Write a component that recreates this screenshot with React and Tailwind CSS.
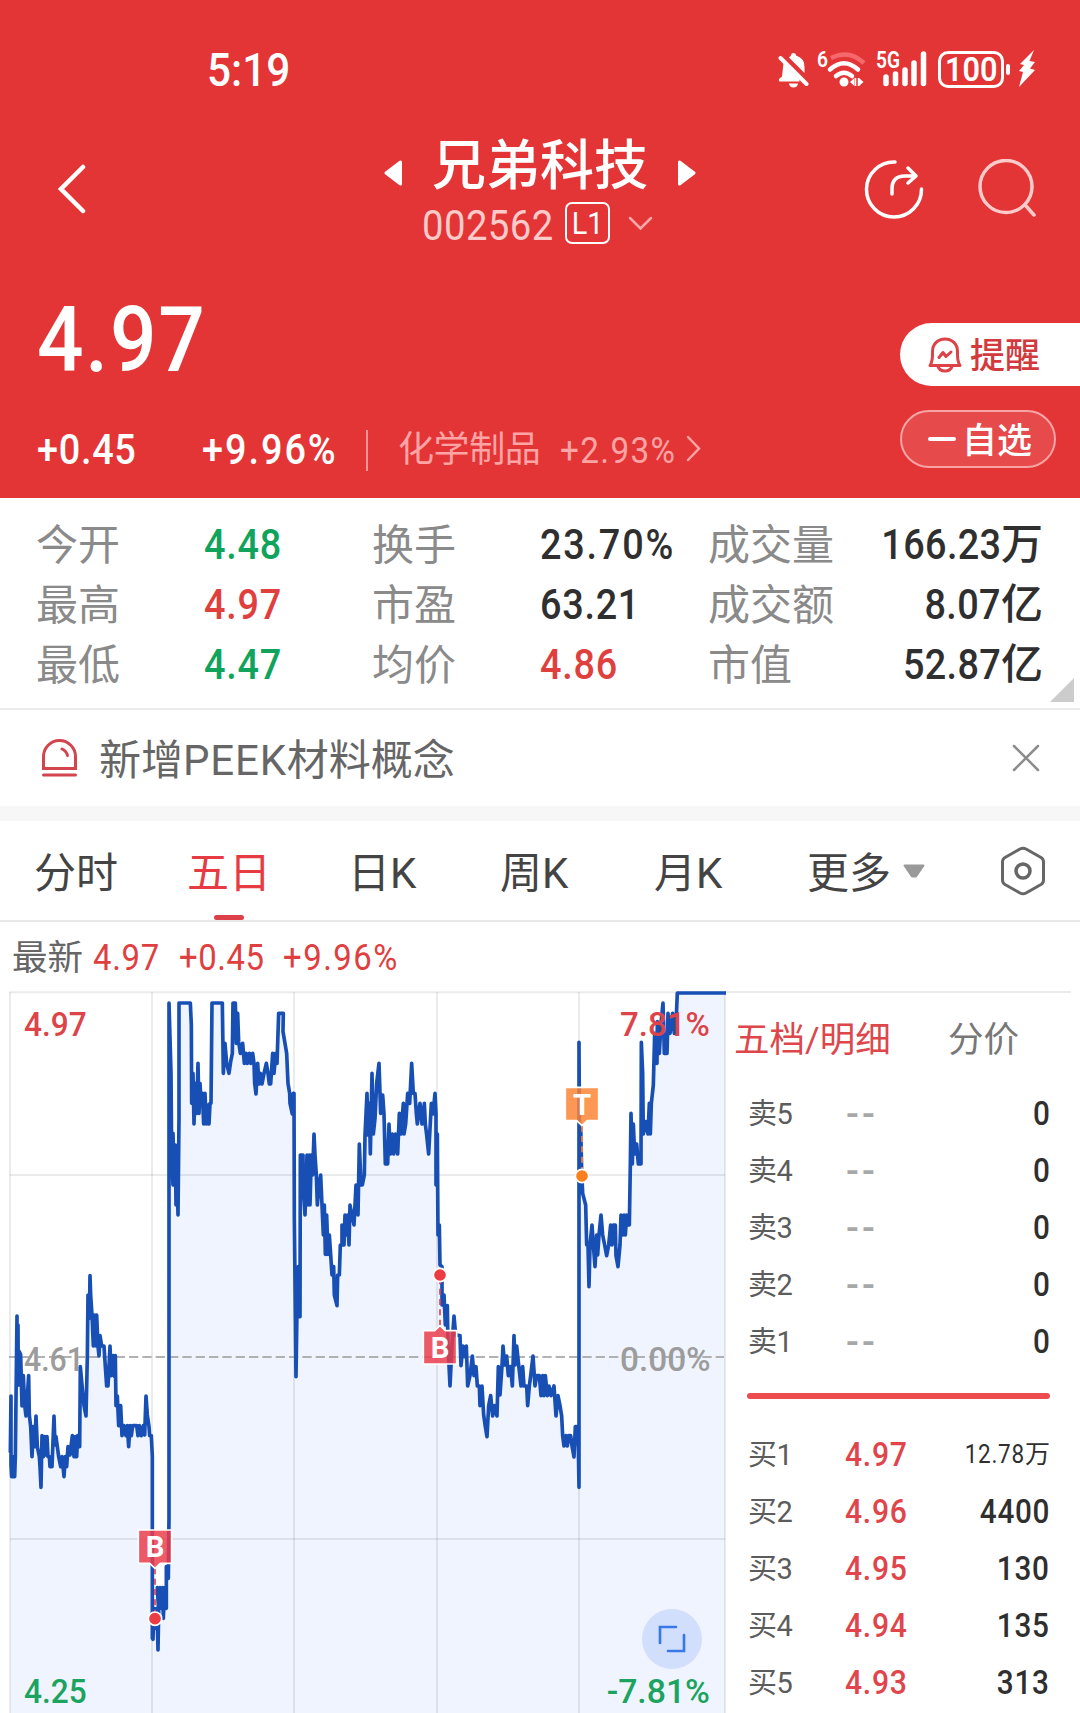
import React, { useState } from 'react';
import clsx from 'clsx';

const stats = [
  [
    { label: '今开', value: '4.48', color: 'text-[#0fa35c]' },
    { label: '换手', value: '23.70%', color: 'text-[#2f2f2f]' },
    { label: '成交量', value: '166.23', unit: '万', color: 'text-[#2f2f2f]' },
  ],
  [
    { label: '最高', value: '4.97', color: 'text-[#e0403d]' },
    { label: '市盈', value: '63.21', color: 'text-[#2f2f2f]' },
    { label: '成交额', value: '8.07', unit: '亿', color: 'text-[#2f2f2f]' },
  ],
  [
    { label: '最低', value: '4.47', color: 'text-[#0fa35c]' },
    { label: '均价', value: '4.86', color: 'text-[#e0403d]' },
    { label: '市值', value: '52.87', unit: '亿', color: 'text-[#2f2f2f]' },
  ],
];

const tabs = [
  { name: '分时', width: 'w-[153px]' },
  { name: '五日', width: 'w-[161px]' },
  { name: '日K', width: 'w-[152px]' },
  { name: '周K', width: 'w-[154px]' },
  { name: '月K', width: 'w-[153px]' },
];

const sells = ['卖5', '卖4', '卖3', '卖2', '卖1'];

const buys = [
  { label: '买1', price: '4.97', volume: '12.78', unit: '万' },
  { label: '买2', price: '4.96', volume: '4400' },
  { label: '买3', price: '4.95', volume: '130' },
  { label: '买4', price: '4.94', volume: '135' },
  { label: '买5', price: '4.93', volume: '313' },
];

// Five days of prices, one string per trading day (x,y in chart units)
const days = [
  '31,1400 33,1233 33,1440 35,1475 38,1415 40,1475 44,1475 46,1415 48,1240 51,993 51,1200 54,1020 55,1200 58,1100 62,1110 66,1263 70,1172 74,1260 78,1293 86,1172 88,1290 92,1325 96,1415 100,1325 104,1385 108,1293 112,1385 118,1415 120,1445 123,1507 126,1352 130,1415 134,1355 138,1410 141,1355 144,1415 148,1415 150,1445 156,1445 162,1293 165,1380 168,1355 172,1385 176,1415 182,1445 186,1415 192,1475 196,1415 200,1445 204,1385 210,1410 217,1352 222,1415 226,1355 230,1415 233,1352 236,1385 239,1385 241,1145 246,1200 252,1262 258,1293 262,1115 264,930 268,1000 270,872 272,930 276,990 280,1083 284,990 288,1083 290,990 294,1083 297,1113 300,1052 305,1083 312,1083 316,1145 320,1203 324,1203 330,1083 334,1172 340,1112 344,1175 346,1112 348,1262 352,1233 356,1322 362,1262 366,1352 372,1322 378,1352 382,1322 386,1385 390,1322 394,1352 398,1322 410,1322 414,1352 418,1322 424,1352 430,1322 434,1350 438,1233 442,1290 447,1325 449,1352 454,1352 457,1415 457,1960',
  '459,1963 462,1870 468,1930 471,1870 474,1995 476,1880 472,1808 476,1870 480,1808 484,1870 488,1808 490,1900 494,1808 496,1870 499,1870 499,1745 505,1780 507,1600 507,54 513,265 515,510 519,600 519,445 523,600 526,480 528,660 530,510 534,690 537,400 537,54 571,54 574,120 575,355 579,265 582,417 586,295 590,385 594,235 597,385 600,295 603,350 607,325 611,417 615,325 619,417 622,360 627,417 630,355 633,355 636,54 667,54 670,265 675,175 680,235 687,265 692,230 697,205 699,54 706,54 709,175 713,85 716,170 721,205 728,175 733,235 738,205 742,235 748,205 752,235 758,205 762,235 764,295 768,327 773,235 777,297 781,265 786,297 792,265 799,235 804,265 808,297 812,297 818,205 822,265 827,205 831,235 836,85 850,85 849,140 855,175 860,205 864,295 869,325 870,355 877,387 880,325 882,325 883,700',
  '888,1175 892,905 895,845 900,995 901,510 909,510 909,600 915,690 921,510 924,660 928,510 930,660 934,510 938,570 942,447 945,510 949,570 952,660 957,600 962,570 966,660 970,750 973,660 976,808 980,690 984,808 988,750 992,808 996,870 1001,845 1003,930 1011,962 1013,870 1018,870 1021,780 1026,780 1026,720 1032,780 1035,690 1040,750 1043,690 1047,780 1050,660 1056,690 1062,720 1068,600 1074,690 1078,477 1083,600 1087,600 1093,570 1095,450 1101,325 1104,450 1108,355 1111,507 1116,265 1120,447 1125,400 1130,295 1137,235 1142,385 1148,330 1152,387 1156,537 1163,537 1167,417 1171,507 1177,447 1181,507 1186,447 1193,507 1198,385 1203,447 1210,355 1212,447 1217,417 1223,325 1229,355 1235,235 1240,325 1245,325 1249,385 1252,417 1260,355 1266,417 1273,355 1276,417 1280,450 1286,507 1294,355 1299,387 1305,325 1308,385',
  '1308,600 1312,447 1314,750 1318,720 1320,840 1326,845 1326,960 1332,930 1336,1020 1342,962 1344,1080 1350,1203 1356,1080 1362,993 1367,1050 1380,1052 1383,1142 1389,1083 1395,1115 1399,1083 1403,1203 1410,1172 1417,1113 1422,1172 1428,1145 1432,1203 1438,1203 1440,1262 1446,1203 1451,1290 1456,1325 1461,1355 1466,1262 1472,1232 1478,1293 1484,1262 1491,1293 1495,1145 1500,1230 1506,1142 1509,1083 1514,1140 1520,1113 1525,1172 1532,1145 1537,1203 1542,1052 1545,1140 1550,1083 1556,1140 1563,1203 1568,1145 1572,1203 1580,1203 1583,1262 1588,1203 1592,1172 1599,1113 1605,1203 1610,1172 1618,1172 1623,1232 1628,1172 1632,1232 1636,1172 1642,1232 1647,1203 1653,1232 1662,1203 1668,1293 1674,1232 1680,1262 1685,1293 1688,1352 1692,1383 1698,1352 1702,1383 1706,1352 1712,1352 1716,1383 1722,1416 1726,1325 1730,1325 1735,1383 1737,1507',
  '1737,172 1739,560 1742,420 1745,560 1748,625 1757,660 1760,780 1764,780 1767,905 1770,780 1776,720 1780,780 1785,845 1790,750 1793,810 1797,750 1803,690 1808,750 1814,780 1820,812 1826,780 1832,720 1836,780 1840,720 1846,720 1848,812 1854,845 1860,780 1863,690 1868,750 1872,690 1876,750 1880,690 1883,720 1888,720 1891,540 1893,385 1897,537 1900,417 1904,507 1910,477 1915,537 1923,537 1924,172 1928,265 1930,447 1938,410 1944,447 1948,355 1951,447 1954,355 1960,300 1964,145 1971,235 1972,110 1978,205 1983,115 1989,54 1993,205 2001,205 2004,85 2010,145 2018,85 2023,145 2028,115 2032,24 2175,24',
];
const line = days.join(' ');

// Narrow digits, in the manner of DIN
const Num = ({ children, className, right }) => (
  <span className={clsx('inline-block scale-x-90', right ? 'origin-right' : 'origin-left', className)}>{children}</span>
);

const Marker = ({ x, top, dotY, letter, color, dot, up }) => {
  const bottom = top + 100;
  const shape = up
    ? `M${x - 50} ${top}h34l16 -15l16 15h34v100h-100z`
    : `M${x - 50} ${top}h100v100h-34l-16 15l-16 -15h-34z`;
  return (
    <g>
      <line x1={x} x2={x} y1={up ? top - 15 : bottom + 15} y2={dotY} stroke={color} strokeWidth="5" strokeDasharray="18 13" />
      <path d={shape} fill={color} fillOpacity="0.84" stroke="#fff" strokeWidth="5" strokeLinejoin="round" />
      <text x={x} y={top + 82} fill="#fff" fontSize="88" fontWeight="700" textAnchor="middle">{letter}</text>
      <circle cx={x} cy={dotY} r="20" fill={dot} stroke="#fff" strokeWidth="5" />
    </g>
  );
};

const Chart = () => (
  <svg className="block h-[728px] w-[726px] shrink-0 font-['Roboto',sans-serif]" viewBox="0 0 2178 2184">
    <polygon points={`31,2184 ${line} 2175,2184`} fill="#eff4fe" />
    {/* Grid */}
    <g stroke="#000" strokeOpacity="0.08" strokeWidth="6">
      <path d="M27 22H2178M30 570H2175M30 1662H2175" />
      <path d="M30 22V2184M456 22V2184M882 22V2184M1311 22V2184M1737 22V2184M2175 22V2184" />
    </g>
    <path d="M27 1116H2172" stroke="#999" strokeWidth="5" strokeDasharray="28 12" />
    <g fontSize="97" fontWeight="500" fill="#9c9c9c">
      <text x="72" y="1159" textLength="180" lengthAdjust="spacingAndGlyphs">4.61</text>
      <text x="1860" y="1159" textLength="272" lengthAdjust="spacingAndGlyphs">0.00%</text>
    </g>
    <polyline points={line} fill="none" stroke="#184fb5" strokeWidth="11" strokeLinejoin="round" strokeLinecap="round" />
    <g fontSize="97" fontWeight="500">
      <text x="72" y="153" fill="#dd4449" textLength="188" lengthAdjust="spacingAndGlyphs">4.97</text>
      <text x="1860" y="153" fill="#dd4449" textLength="270" lengthAdjust="spacingAndGlyphs">7.81%</text>
      <text x="72" y="2153" fill="#1ba35f" textLength="188" lengthAdjust="spacingAndGlyphs">4.25</text>
      <text x="1820" y="2153" fill="#1ba35f" textLength="310" lengthAdjust="spacingAndGlyphs">-7.81%</text>
    </g>
    <Marker x={465} top={1635} dotY={1901} letter="B" color="#ec3b4a" dot="#ec3b43" />
    <Marker x={1320} top={1037} dotY={870} letter="B" color="#ec3b4a" dot="#ec3b43" up />
    <Marker x={1746} top={307} dotY={573} letter="T" color="#fb8433" dot="#fb7f1f" />
    {/* Expand button */}
    <circle cx="2016" cy="1962" r="90" fill="#d1dffc" />
    <path d="M1980 1974V1926H2028M2052 1950V1998H2004" fill="none" stroke="#3b78e7" strokeWidth="8" strokeLinecap="round" />
  </svg>
);

const StatusBar = () => (
  <div className="flex h-[134px] items-center pt-1 pr-[45px] pl-[207px] text-white">
    <Num className="text-[47px] font-medium">5:19</Num>
    <svg className="ml-auto h-[38px] w-[31px]" viewBox="0 0 31 38" fill="#fff">
      <path d="M13 5.500Q13 3 15.500 3Q18 3 18 5.500Q26.500 8 26.500 17V23L11 7.500Z" />
      <path d="M5.500 13L21.500 29.500V31.500H1.500Q0 30 1.500 28.500L4 26.500Z" />
      <path d="M11 33.500h9a4.500 4 0 0 1 -9 0z" />
      <path d="M2.500 8L28.500 34" stroke="#fff" strokeWidth="4" strokeLinecap="round" />
    </svg>
    <svg className="ml-[8px] h-[58px] w-[50px] font-['Roboto',sans-serif]" viewBox="0 -10 50 58">
      <text x="0" y="17" fill="#fff" fontSize="22" fontWeight="600" textLength="11" lengthAdjust="spacingAndGlyphs">6</text>
      <g fill="none" stroke="#fff" strokeWidth="4.500" strokeLinecap="round">
        <path d="M14 8Q32 -1 47 13" stroke="#f5696c" strokeLinecap="butt" />
        <path d="M13 19.500Q27 7 41 19.500" />
        <path d="M19 26Q27 19.500 35 26" />
      </g>
      <circle cx="27" cy="32" r="4.500" fill="#fff" />
      <path d="M33 32L37.500 28V36ZM46.500 32L42 28V36Z" fill="#fff" />
      <path d="M38.500 28V36M41.500 28V36" stroke="#fff" strokeWidth="1.500" />
    </svg>
    <svg className="ml-[9px] h-[58px] w-[52px] font-['Roboto',sans-serif]" viewBox="0 -10 52 58">
      <text x="0" y="18" fill="#fff" fontSize="23" fontWeight="600" textLength="24" lengthAdjust="spacingAndGlyphs">5G</text>
      <path d="M10 27V33.500M19.500 24V33.500M29 20V33.500M38 13V33.500M47.500 4V33.500" stroke="#fff" strokeWidth="5.500" strokeLinecap="round" />
    </svg>
    <div className="ml-[10px] flex h-[37px] w-[66px] items-center justify-center rounded-[10px] border-[3px] border-white text-[34px] font-semibold">
      <span className="scale-x-90">100</span>
    </div>
    <div className="ml-[2px] h-[11px] w-[4px] rounded-sm bg-white" />
    <svg className="ml-[8px] h-[38px] w-[17px]" viewBox="0 0 17 38" fill="#fff">
      <path d="M16 0L2 14L6 15L1 21L5 22L1 37L17 20L12 18.500L17 12L11.500 11Z" />
    </svg>
  </div>
);

const NavBar = () => (
  <div className="flex h-[110px] items-center justify-between pr-[44px] pl-[58px] text-white">
    <svg className="mr-[90px] h-[50px] w-[28px]" viewBox="0 0 28 50" fill="none" stroke="#fff" strokeWidth="4.500" strokeLinecap="round">
      <path d="M25 3L3 25L25 47" />
    </svg>
    <div className="flex h-full flex-col items-center pt-[4px] pl-[40px]">
      <div className="flex h-[54px] items-center">
        <svg className="mt-4 h-[28px] w-[18px]" viewBox="0 0 18 28" fill="#fff" stroke="#fff" strokeWidth="3" strokeLinejoin="round">
          <path d="M16.500 3V25L2 14Z" />
        </svg>
        <h1 className="mx-[30px] pt-1 text-[54px] font-medium">兄弟科技</h1>
        <svg className="mt-4 h-[28px] w-[18px]" viewBox="0 0 18 28" fill="#fff" stroke="#fff" strokeWidth="3" strokeLinejoin="round">
          <path d="M1.500 3V25L16 14Z" />
        </svg>
      </div>
      <div className="mt-[10px] flex h-[42px] items-center pr-[5px]">
        <Num className="mt-[6px] w-[131px] text-[42.500px] tracking-[0.5px] text-[#ffcaca]">002562</Num>
        <span className="ml-[12px] flex h-[42px] w-[45px] items-center justify-center rounded-[7px] border-2 border-white text-[32px]">
          <span className="scale-x-90">L1</span>
        </span>
        <svg className="ml-[18px] h-[15px] w-[25px]" viewBox="0 0 25 15" fill="none" stroke="#ffa9aa" strokeWidth="2.500" strokeLinecap="round">
          <path d="M2 2L12.500 12.500L23 2" />
        </svg>
      </div>
    </div>
    <div className="flex items-center gap-[52px]">
      <svg className="h-[60px] w-[60px]" viewBox="0 0 60 60" fill="none" stroke="#fff" strokeWidth="3.500" strokeLinecap="round" strokeLinejoin="round">
        <path d="M31 3A27.500 27.500 0 1 0 57.500 30" />
        <path d="M28 35V30Q28 17 41 17H52M44 9L52 17L44 24" />
      </svg>
      <svg className="h-[60px] w-[60px]" viewBox="0 0 60 60" fill="none" stroke="#ffcaca" strokeWidth="3.500" strokeLinecap="round">
        <circle cx="30" cy="27.500" r="26" />
        <path d="M50 47L58 56" />
      </svg>
    </div>
  </div>
);

const PricePanel = () => (
  <div className="flex h-[254px] justify-between pl-[37px]">
    <div className="pt-[51px] text-white">
      <Num className="block text-[91px] font-medium tracking-[2px]">4.97</Num>
      <div className="mt-[43px] flex h-[42px] items-center text-[42px] font-medium">
        <Num className="w-[165px] tracking-[0.8px]">+0.45</Num>
        <Num className="w-[164px] tracking-[2.2px]">+9.96%</Num>
        <span className="h-[41px] w-[2px] bg-[#f39596]" />
        <span className="ml-[30px] text-[36px] font-normal tracking-[-0.4px] text-[#ffa4a5]">化学制品</span>
        <Num className="ml-[20px] w-[114px] text-[37px] font-normal tracking-[1.500px] text-[#ffa4a5]">+2.93%</Num>
        <svg className="-mt-1 ml-[12px] h-[27px] w-[15px]" viewBox="0 0 15 27" fill="none" stroke="#ffa4a5" strokeWidth="2.500" strokeLinecap="round">
          <path d="M2 2L13 13.500L2 25" />
        </svg>
      </div>
    </div>
    <div className="pt-[79px]">
      <button className="flex h-[63px] w-[180px] items-center rounded-l-full bg-white pl-[28px] text-[35px] font-medium text-[#d23a3d]">
        <svg className="mr-[8px] h-[36px] w-[34px]" viewBox="0 0 34 36" fill="none" stroke="#dc4248" strokeWidth="3" strokeLinecap="round" strokeLinejoin="round">
          <path d="M2 28.500C5 24 4.500 20 4.500 14.500C4.500 7 10 2 17 2C24 2 29.500 7 29.500 14.500C29.500 20 29 24 32 28.500Z" />
          <path d="M10 29.500Q11.500 34 17 34Q22.500 34 24 29.500" />
          <path d="M11 20.500L15 15.500L18 19.500L23 15" />
        </svg>
        <span className="pt-[3px]">提醒</span>
      </button>
      <button className="mt-[24px] flex h-[58px] w-[156px] items-center rounded-full border-2 border-[#f8a3a4] bg-[#e64a4b] pl-[26px] text-[35px] font-medium text-white">
        <span className="mr-[6px] h-[4px] w-[28px] rounded-full bg-white" />
        <span className="pt-1">自选</span>
      </button>
    </div>
  </div>
);

const Stats = () => (
  <div className="relative h-[212px] border-b-2 border-[#ebebeb] pt-[17px] pr-[37px] pl-[36px] text-[42px]">
    {stats.map((row, i) => (
      <div key={i} className="flex h-[60px] items-center">
        {row.map((cell, j) => (
          <React.Fragment key={cell.label}>
            <span className={clsx('pt-[2px] text-[#8a8a8a]', j === 2 ? 'w-[140px]' : 'w-[168px]')}>{cell.label}</span>
            {cell.unit ? (
              <span className={clsx('flex-1 text-right font-medium', cell.color)}>
                <Num right className="tracking-[0.4px]">{cell.value}</Num>
                {cell.unit}
              </span>
            ) : (
              <Num className={clsx('w-[168px] font-medium', cell.value.endsWith('%') ? 'tracking-[2px]' : 'tracking-[0.8px]', cell.color)}>
                {cell.value}
              </Num>
            )}
          </React.Fragment>
        ))}
      </div>
    ))}
    <svg className="absolute right-[6px] bottom-[6px] h-[24px] w-[24px]" viewBox="0 0 24 24" fill="#ccc">
      <path d="M24 0V24H0Z" />
    </svg>
  </div>
);

const Notice = ({ onClose }) => (
  <div className="flex h-[96px] items-center pr-[40px] pl-[41px]">
    <svg className="h-[38px] w-[37px]" viewBox="0 0 37 38" fill="none" stroke="#d2454e" strokeWidth="3" strokeLinecap="round">
      <path d="M2.500 29.500V17.500A16 16 0 0 1 34.500 17.500V29.500Z" />
      <path d="M2.500 36H34.500" />
      <path d="M21 10Q25.500 12 26.500 16.500" />
    </svg>
    <span className="ml-[21px] pt-[5px] text-[42px] text-[#666]">
      新增<span className="tracking-[0.8px]">PEEK</span>材料概念
    </span>
    <button onClick={onClose} className="ml-auto">
      <svg className="h-[28px] w-[28px]" viewBox="0 0 28 28" fill="none" stroke="#8c8c8c" strokeWidth="2.500" strokeLinecap="round">
        <path d="M2 2L26 26M26 2L2 26" />
      </svg>
    </button>
  </div>
);

const OrderBook = () => (
  <div className="mt-[6px] mr-[9px] flex-1 border-t-2 border-[#ebebeb] text-[29px] text-[#5c5c5c]">
    <div className="flex h-[92px] items-center pt-1 pl-[8px] text-[35.500px]">
      <span className="w-[214px] text-[#dd474b]">五档/明细</span>
      <span className="text-[#777]">分价</span>
    </div>
    {sells.map((label) => (
      <div key={label} className="flex h-[57px] items-center pr-[21px] pl-[22px]">
        <span className="w-[98px] pt-[2px] tracking-[-0.5px]">{label}</span>
        <span className="text-[38px] font-medium tracking-[3px] text-[#a8a8a8]">--</span>
        <Num right className="ml-auto text-[33px] font-medium text-[#2f2f2f]">0</Num>
      </div>
    ))}
    <div className="mt-[23px] mr-[21px] mb-[27px] ml-[21px] h-[6px] rounded-full bg-[#ee4b4e]" />
    {buys.map((row) => (
      <div key={row.label} className="flex h-[57px] items-center pr-[21px] pl-[22px]">
        <span className="w-[97px] pt-[2px] tracking-[-0.5px]">{row.label}</span>
        <Num className="text-[33.500px] font-medium tracking-[0.8px] text-[#df454a]">{row.price}</Num>
        <span className={clsx('ml-auto text-[#2f2f2f]', row.unit ? 'text-[25px]' : 'text-[33px] font-medium')}>
          <Num right className="tracking-[0.8px]">{row.volume}</Num>
          {row.unit}
        </span>
      </div>
    ))}
  </div>
);

const App = () => {
  const [activeTab, setActiveTab] = useState('五日');
  const [showNotice, setShowNotice] = useState(true);

  return (
    <div className="h-[1713px] w-[1080px] overflow-hidden bg-white font-['Roboto','Noto_Sans_CJK_SC',sans-serif] leading-none whitespace-nowrap">
      {/* Header */}
      <header className="bg-[#e33536]">
        <StatusBar />
        <NavBar />
        <PricePanel />
      </header>

      <Stats />
      {showNotice && <Notice onClose={() => setShowNotice(false)} />}
      <div className="h-[15px] bg-[#f7f7f7]" />

      {/* Period tabs */}
      <nav className="flex h-[101px] items-center border-b-2 border-[#e8e8e8] pl-[34px] text-[42px] text-[#444]">
        {tabs.map((tab) => (
          <button
            key={tab.name}
            onClick={() => setActiveTab(tab.name)}
            className={clsx('flex h-full cursor-pointer', tab.width)}
          >
            <span className={clsx('relative flex h-full items-center pt-[6px]', activeTab === tab.name && 'text-[#e63b43]')}>
              {tab.name}
              {activeTab === tab.name && (
                <span className="absolute bottom-0 left-1/2 h-[5px] w-[30px] -translate-x-1/2 rounded-full bg-[#dd4048]" />
              )}
            </span>
          </button>
        ))}
        <span className="pt-[6px]">更多</span>
        <svg className="ml-[12px] h-[14px] w-[22px]" viewBox="0 0 22 14" fill="#999" stroke="#999" strokeWidth="2" strokeLinejoin="round">
          <path d="M1.500 1.500H20.500L13 12.500H9Z" />
        </svg>
        <svg className="ml-[76px] h-[50px] w-[44px]" viewBox="0 0 44 50" fill="none" stroke="#666" strokeWidth="3" strokeLinejoin="round">
          <path d="M19 3Q22 1.500 25 3L40 11.500Q42.500 13 42.500 16V34Q42.500 37 40 38.500L25 47Q22 48.500 19 47L4 38.500Q1.500 37 1.500 34V16Q1.500 13 4 11.500Z" />
          <circle cx="22" cy="25" r="7" strokeWidth="3.500" />
        </svg>
      </nav>

      <div className="flex h-[63px] items-center pt-[9px] pl-[12px] text-[36.500px] text-[#df403f]">
        <span className="w-[81px] pt-[2px] text-[35.500px] text-[#666]">最新</span>
        <Num className="w-[86px] tracking-[0.8px]">4.97</Num>
        <Num className="w-[104px] tracking-[0.6px]">+0.45</Num>
        <Num className="tracking-[1.700px]">+9.96%</Num>
      </div>

      <div className="flex">
        <Chart />
        <OrderBook />
      </div>
    </div>
  );
};

export default App;
